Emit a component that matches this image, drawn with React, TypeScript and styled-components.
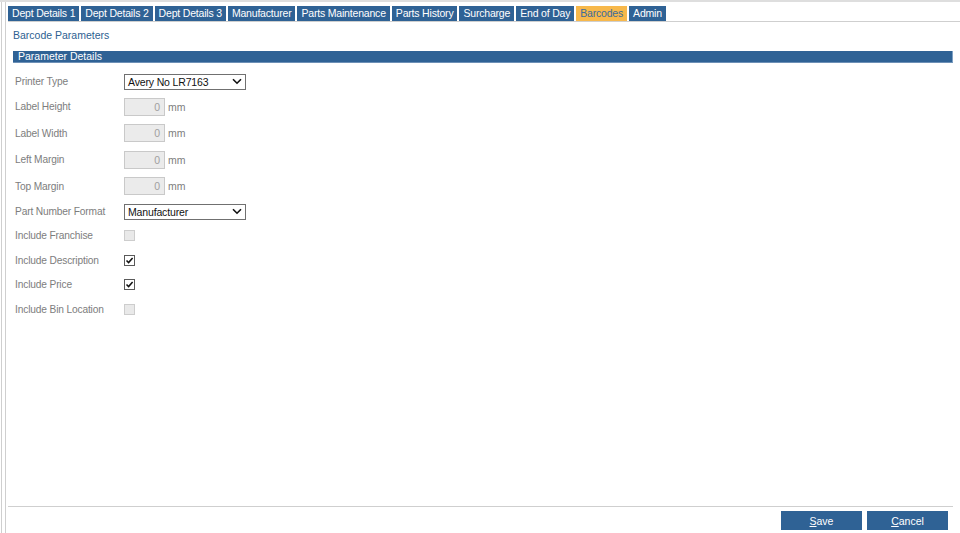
import React from "react";
import styled, { createGlobalStyle } from "styled-components";

const Global = createGlobalStyle`
  html, body { margin: 0; padding: 0; background: #fff; }
  body { font-family: "Liberation Sans", Arial, sans-serif; font-size: 10px; }
  * { box-sizing: border-box; }
`;

const BLUE = "#2f6295";

const Frame = styled.div`
  height: 533px;
  border-top: 2px solid #dedede;
  display: flex;
`;

const LeftRail = styled.div`
  width: 8px;
  flex: none;
  display: flex;
  gap: 3px;
  padding-left: 1px;
  &::before, &::after {
    content: "";
    width: 1px;
    background: #cfcfcf;
  }
`;

const Main = styled.div`
  flex: 1;
  display: flex;
  flex-direction: column;
  min-width: 0;
`;

const TabBar = styled.div`
  display: flex;
  gap: 2px;
  margin-top: 4px;
  border-bottom: 1px solid #cfcfcf;
  height: 16px;
`;

const Tab = styled.div<{ $active?: boolean }>`
  height: 15px;
  line-height: 15px;
  padding: 0 4px;
  font-size: 10.5px;
  letter-spacing: -0.19px;
  white-space: nowrap;
  color: ${(p) => (p.$active ? "#3b6b9c" : "#fff")};
  background: ${(p) => (p.$active ? "#f7b84b" : BLUE)};
`;

const Content = styled.div`
  flex: 1;
  display: flex;
  flex-direction: column;
  padding-right: 7px;
`;

const Title = styled.div`
  color: #2d5f91;
  font-size: 10.5px;
  padding-left: 5px;
  height: 29px;
  line-height: 15px;
  padding-top: 6px;
`;

const SectionBar = styled.div`
  margin-left: 5px;
  height: 12px;
  line-height: 11px;
  background: ${BLUE};
  color: #fff;
  font-size: 10.5px;
  padding-left: 5px;
  border-right: 1px solid #7fa1c4;
  border-bottom: 1px solid #6d90b6;
`;

const Form = styled.div`
  flex: 1;
  padding-top: 6.5px;
  padding-left: 7px;
  display: flex;
  flex-direction: column;
`;

const Row = styled.div<{ $h: number }>`
  display: flex;
  align-items: center;
  height: ${(p) => p.$h}px;
`;

const Label = styled.div`
  width: 109px;
  color: #7d7d7d;
  font-size: 10.2px;
  letter-spacing: -0.15px;
  white-space: nowrap;
`;

const Select = styled.div`
  width: 122px;
  height: 16px;
  border: 1px solid #707070;
  display: flex;
  align-items: center;
  justify-content: space-between;
  padding: 0 3px 0 3px;
  color: #111;
  font-size: 10.5px;
  letter-spacing: -0.15px;
`;

const NumBox = styled.div`
  width: 41px;
  height: 18px;
  border: 1px solid #c9c9c9;
  background: #ebebeb;
  color: #a0a0a0;
  text-align: right;
  padding-right: 4px;
  line-height: 16px;
  font-size: 10.5px;
`;

const Unit = styled.span`
  color: #7d7d7d;
  margin-left: 3px;
  font-size: 10.5px;
`;

const Check = styled.div<{ $checked?: boolean }>`
  width: 11px;
  height: 11px;
  border: 1px solid ${(p) => (p.$checked ? "#5a5a5a" : "#cdcdcd")};
  background: ${(p) => (p.$checked ? "#fff" : "#e9e9e9")};
  display: flex;
  align-items: center;
  justify-content: center;
`;

const Footer = styled.div`
  border-top: 1px solid #cfcfcf;
  height: 27px;
  display: flex;
  justify-content: flex-end;
  gap: 5px;
  padding-top: 4px;
  padding-right: 5px;
`;

const Button = styled.button`
  width: 81px;
  height: 19px;
  border: none;
  background: ${BLUE};
  color: #fff;
  font-family: "Liberation Sans", Arial, sans-serif;
  font-size: 10.5px;
  padding: 0;
  cursor: pointer;
  & u { text-decoration: underline; }
`;

const Chevron = () => (
  <svg width="10" height="7" viewBox="0 0 10 7">
    <path d="M1 1.2 L5 5.2 L9 1.2" fill="none" stroke="#111" strokeWidth="1.6" />
  </svg>
);

const Tick = () => (
  <svg width="9" height="9" viewBox="0 0 9 9">
    <path d="M1.5 4.5 L3.6 6.6 L7.6 2" fill="none" stroke="#111" strokeWidth="1.5" />
  </svg>
);

const tabs = [
  "Dept Details 1",
  "Dept Details 2",
  "Dept Details 3",
  "Manufacturer",
  "Parts Maintenance",
  "Parts History",
  "Surcharge",
  "End of Day",
  "Barcodes",
  "Admin",
];

const numRows = ["Label Height", "Label Width", "Left Margin", "Top Margin"];
const checks: [string, boolean][] = [
  ["Include Franchise", false],
  ["Include Description", true],
  ["Include Price", true],
  ["Include Bin Location", false],
];

export default function App() {
  return (
    <>
      <Global />
      <Frame>
        <LeftRail />
        <Main>
          <TabBar>
            {tabs.map((t) => (
              <Tab key={t} $active={t === "Barcodes"}>
                {t}
              </Tab>
            ))}
          </TabBar>
          <Content>
            <Title>Barcode Parameters</Title>
            <SectionBar>Parameter Details</SectionBar>
            <Form>
              <Row $h={24}>
                <Label>Printer Type</Label>
                <Select>
                  <span>Avery No LR7163</span>
                  <Chevron />
                </Select>
              </Row>
              {numRows.map((l) => (
                <Row $h={26.5} key={l}>
                  <Label>{l}</Label>
                  <NumBox>0</NumBox>
                  <Unit>mm</Unit>
                </Row>
              ))}
              <Row $h={24}>
                <Label>Part Number Format</Label>
                <Select>
                  <span>Manufacturer</span>
                  <Chevron />
                </Select>
              </Row>
              {checks.map(([l, c]) => (
                <Row $h={24.5} key={l}>
                  <Label>{l}</Label>
                  <Check $checked={c}>{c && <Tick />}</Check>
                </Row>
              ))}
            </Form>
            <Footer>
              <Button>
                <u>S</u>ave
              </Button>
              <Button>
                <u>C</u>ancel
              </Button>
            </Footer>
          </Content>
        </Main>
      </Frame>
    </>
  );
}
